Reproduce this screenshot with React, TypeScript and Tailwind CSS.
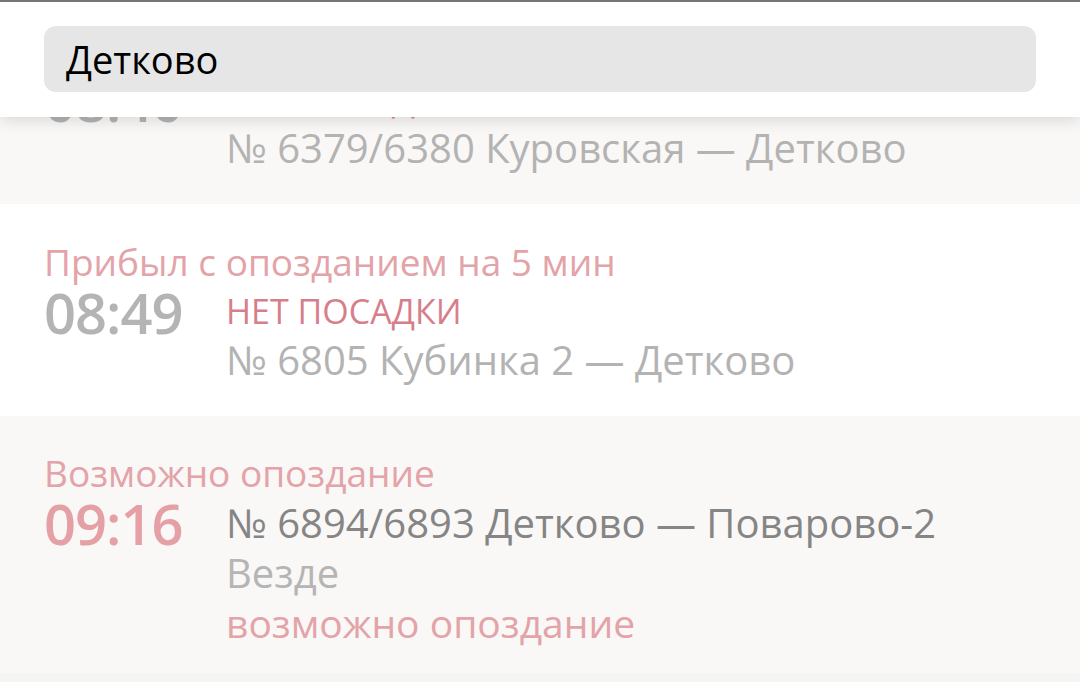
import React from 'react';

type Train = {
  status?: string;
  time: string;
  timeTone: 'gray' | 'pink';
  notice?: string;
  route: string;
  routeTone: 'light' | 'dark';
  stops?: string;
  note?: string;
  shaded: boolean;
};

const trains: Train[] = [
  {
    status: 'Прибыл с опозданием на 3 мин',
    time: '08:40',
    timeTone: 'gray',
    notice: 'НЕТ ПОСАДКИ',
    route: '№ 6379/6380 Куровская — Детково',
    routeTone: 'light',
    shaded: true,
  },
  {
    status: 'Прибыл с опозданием на 5 мин',
    time: '08:49',
    timeTone: 'gray',
    notice: 'НЕТ ПОСАДКИ',
    route: '№ 6805 Кубинка 2 — Детково',
    routeTone: 'light',
    shaded: false,
  },
  {
    status: 'Возможно опоздание',
    time: '09:16',
    timeTone: 'pink',
    route: '№ 6894/6893 Детково — Поварово-2',
    routeTone: 'dark',
    stops: 'Везде',
    note: 'возможно опоздание',
    shaded: true,
  },
];

function TrainRow({ t }: { t: Train }) {
  return (
    <div
      className={`pl-[44px] pr-6 ${t.notice ? 'pt-[33px] pb-[31px]' : 'pt-[32px] pb-[25px]'} ${
        t.shaded ? 'bg-[#f9f8f6]' : 'bg-white'
      }`}
    >
      {t.status && (
        <div className="text-[37px] leading-[50px] text-[#e3a3a8]">{t.status}</div>
      )}
      <div className="flex">
        <div
          className={`w-[182px] shrink-0 text-[56px] leading-[50px] font-semibold tracking-[-1px] ${
            t.timeTone === 'pink' ? 'text-[#e5a0a5]' : 'text-[#b4b4b4]'
          }`}
        >
          {t.time}
        </div>
        <div className="flex flex-col">
          {t.notice && (
            <div className="text-[34px] leading-[48px] text-[#d67f8b]">{t.notice}</div>
          )}
          <div
            className={`text-[40px] leading-[50px] ${
              t.routeTone === 'dark' ? 'text-[#858585]' : 'text-[#b3b3b3]'
            }`}
          >
            {t.route}
          </div>
          {t.stops && <div className="text-[40px] leading-[50px] text-[#b5b5b5]">{t.stops}</div>}
          {t.note && <div className="text-[39px] leading-[50px] text-[#e3a3a8]">{t.note}</div>}
        </div>
      </div>
    </div>
  );
}

export default function App() {
  return (
    <div
      className="relative h-[682px] w-[1080px] overflow-hidden bg-[#f5f5f3]"
      style={{ fontFamily: '"Open Sans", "Noto Sans", sans-serif' }}
    >
      <div className="-mt-[8px] flex flex-col">
        {trains.map((t) => (
          <TrainRow key={t.time} t={t} />
        ))}
      </div>

      {/* search header, lies over the scrolled list */}
      <div className="absolute inset-x-0 top-0 h-[117px] border-t-2 border-[#767676] bg-white shadow-[0_4px_14px_rgba(0,0,0,0.12)]">
        <div className="mx-[44px] mt-[24px] flex h-[66px] items-center rounded-[12px] bg-[#e6e6e6] px-[22px]">
          <span className="text-[38px] text-black">Детково</span>
        </div>
      </div>
    </div>
  );
}
